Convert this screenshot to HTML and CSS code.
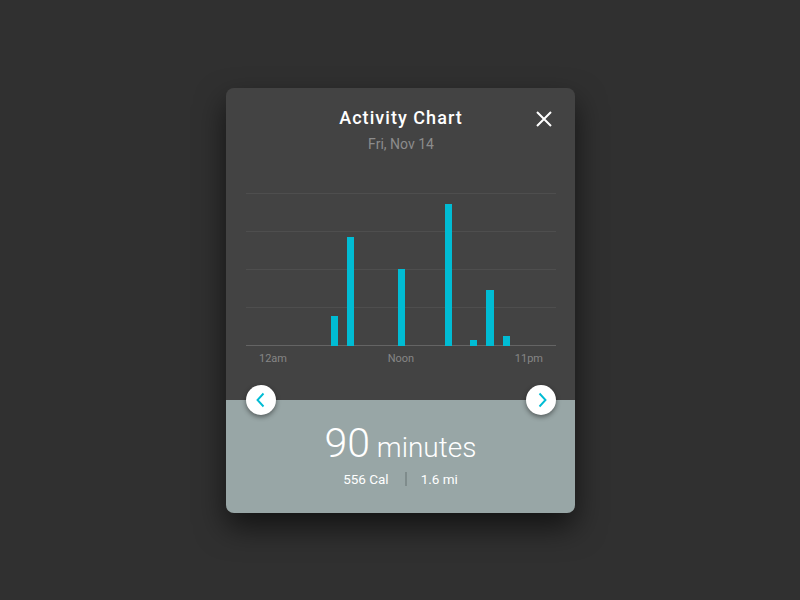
FILE: index.html
```html
<!DOCTYPE html>
<html lang="en">

<head>
    <meta charset="UTF-8">
    <title>Activity Chart</title>
    <link rel="stylesheet" href="styles.css">
</head>

<body>
    <div class="card">
        <div class="card-top">
            <div class="header">
                <h1 class="title">Activity Chart</h1>
                <p class="date">Fri, Nov 14</p>
                <button class="close-button" aria-label="Close">
                    <svg width="16" height="16" viewBox="0 0 16 16">
                        <path d="M1 1 L15 15 M15 1 L1 15" stroke="#fff" stroke-width="2" fill="none" />
                    </svg>
                </button>
            </div>
            <div class="chart">
                <div class="grid-line"></div>
                <div class="grid-line"></div>
                <div class="grid-line"></div>
                <div class="grid-line"></div>
                <div class="grid-line base-line"></div>
                <div class="bar" style="left: 85px; width: 7px; height: 30px"></div>
                <div class="bar" style="left: 101px; width: 7px; height: 109px"></div>
                <div class="bar" style="left: 152px; width: 7px; height: 77px"></div>
                <div class="bar" style="left: 199px; width: 7px; height: 142px"></div>
                <div class="bar" style="left: 224px; width: 7px; height: 6px"></div>
                <div class="bar" style="left: 240px; width: 8px; height: 56px"></div>
                <div class="bar" style="left: 257px; width: 7px; height: 10px"></div>
            </div>
            <div class="axis">
                <span>12am</span>
                <span>Noon</span>
                <span>11pm</span>
            </div>
        </div>
        <div class="card-bottom">
            <div class="total"><span class="total-number">90</span> minutes</div>
            <div class="stats">
                <span>556 Cal</span>
                <span class="stats-divider"></span>
                <span>1.6 mi</span>
            </div>
        </div>
        <button class="nav-button nav-prev" aria-label="Previous day">
            <svg width="10" height="16" viewBox="0 0 10 16">
                <path d="M8.5 1.5 L2.5 8 L8.5 14.5" stroke="#00bcd4" stroke-width="1.9" fill="none" />
            </svg>
        </button>
        <button class="nav-button nav-next" aria-label="Next day">
            <svg width="10" height="16" viewBox="0 0 10 16">
                <path d="M1.5 1.5 L7.5 8 L1.5 14.5" stroke="#00bcd4" stroke-width="1.9" fill="none" />
            </svg>
        </button>
    </div>
</body>

</html>
```

FILE: styles.css
```css
* {
    box-sizing: border-box;
}
body {
    height: 100vh;
    margin: 0;
    padding: 88px 0 0 226px;
    overflow: hidden;
    font-family: Roboto, sans-serif;
    background-color: #303030;
}
.card {
    position: relative;
    width: 349px;
    height: 425px;
    display: flex;
    flex-direction: column;
    border-radius: 8px;
    box-shadow: 0 14px 30px rgba(0, 0, 0, 0.6);
}
.card-top {
    height: 312px;
    padding: 0 19px 0 20px;
    background-color: #434343;
    border-radius: 8px 8px 0 0;
}
.header {
    position: relative;
    height: 105px;
    padding-top: 18px;
    text-align: center;
}
.title {
    margin: 0;
    font-size: 18px;
    line-height: 24px;
    font-weight: 500;
    letter-spacing: 1.05px;
    color: #fff;
}
.date {
    margin: 4px 0 0;
    font-size: 14px;
    line-height: 20px;
    color: #8c8c8c;
}
.close-button {
    position: absolute;
    top: 23px;
    right: 4px;
    width: 16px;
    height: 16px;
    padding: 0;
    border: none;
    background: none;
    display: flex;
}
.chart {
    position: relative;
    height: 153px;
    display: flex;
    flex-direction: column;
    justify-content: space-between;
}
.grid-line {
    height: 1px;
    background-color: #4e4e4e;
}
.base-line {
    background-color: #646464;
}
.bar {
    position: absolute;
    bottom: 0;
    background-color: #00bcd4;
}
.axis {
    display: flex;
    justify-content: space-between;
    padding: 5px 13px 0;
    font-size: 11px;
    line-height: 16px;
    color: #868686;
}
.card-bottom {
    flex: 1;
    padding-top: 22px;
    text-align: center;
    color: #fff;
    background-color: #98a6a6;
    border-radius: 0 0 8px 8px;
}
.total {
    font-size: 28px;
    line-height: 43px;
    font-weight: 300;
}
.total-number {
    font-size: 41px;
}
.stats {
    display: flex;
    justify-content: center;
    align-items: center;
    gap: 14px;
    font-size: 13.5px;
    line-height: 20px;
}
.stats-divider {
    width: 2px;
    height: 14px;
    margin-left: 2px;
    background-color: #7f8c8c;
}
.nav-button {
    position: absolute;
    top: 297px;
    width: 30px;
    height: 30px;
    padding: 0;
    border: none;
    border-radius: 50%;
    display: flex;
    align-items: center;
    justify-content: center;
    background-color: #fff;
    box-shadow: 0 2px 5px rgba(0, 0, 0, 0.45);
}
.nav-prev {
    left: 20px;
    padding-right: 2px;
}
.nav-next {
    right: 19px;
    padding-left: 3px;
}
```
